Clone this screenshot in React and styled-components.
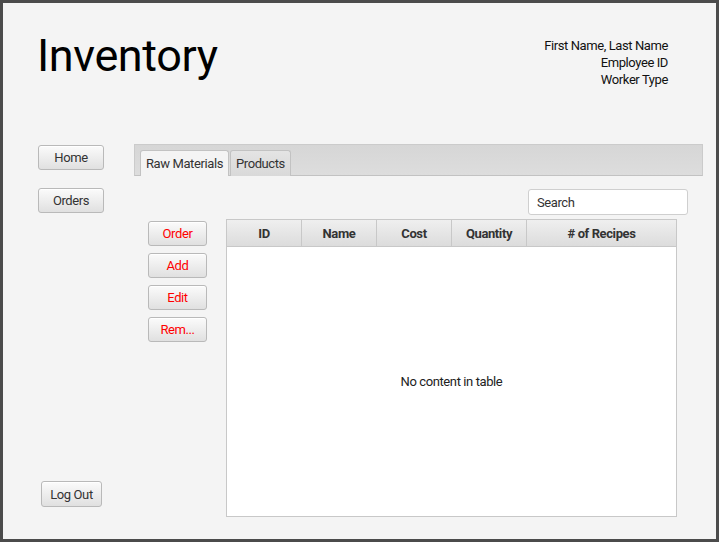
import React from 'react'
import styled, { createGlobalStyle } from 'styled-components'

const GlobalStyle = createGlobalStyle`
  html, body { margin: 0; padding: 0; }
  body {
    font-family: Roboto, "Liberation Sans", sans-serif;
    background: #4b4b4b;
  }
`

const Frame = styled.div`
  width: 719px;
  height: 542px;
  box-sizing: border-box;
  border: 3px solid #4b4b4b;
  background: #f4f4f4;
  display: flex;
  flex-direction: column;
  letter-spacing: -0.4px;
`

const Header = styled.div`
  height: 141px;
  flex: none;
  display: flex;
  justify-content: space-between;
  align-items: flex-start;
  padding: 0 48px 0 34px;
`

const Title = styled.h1`
  margin: 30px 0 0;
  font-size: 45px;
  line-height: 46px;
  font-weight: 400;
  color: #000;
  letter-spacing: -0.4px;
`

const UserInfo = styled.div`
  margin-top: 34px;
  text-align: right;
  font-size: 13px;
  line-height: 17px;
  color: #111;
`

const Body = styled.div`
  flex: 1;
  display: flex;
  gap: 30px;
  padding: 0 13px 22px 35px;
  min-height: 0;
`

const Sidebar = styled.div`
  width: 66px;
  flex: none;
  display: flex;
  flex-direction: column;
  align-items: center;
  gap: 18px;
  padding: 1px 0 10px;
`

const Button = styled.button`
  box-sizing: border-box;
  width: ${p => p.$w || 66}px;
  height: ${p => p.$h || 25}px;
  padding: 0;
  border: 1px solid #b9b9b9;
  border-radius: 3px;
  background: linear-gradient(to bottom, #fbfbfb, #e0e0e0);
  box-shadow: inset 0 1px 0 #ffffff;
  font-family: Roboto, "Liberation Sans", sans-serif;
  font-size: 13px;
  letter-spacing: -0.4px;
  color: ${p => (p.$danger ? '#ff0000' : '#333')};
  cursor: pointer;
`

const LogOutButton = styled(Button)`
  margin-top: auto;
  margin-left: 1px;
`

const Main = styled.div`
  flex: 1;
  display: flex;
  flex-direction: column;
  min-width: 0;
`

const TabHeader = styled.div`
  height: 32px;
  flex: none;
  box-sizing: border-box;
  border: 1px solid #cbcbcb;
  border-bottom-color: #c2c2c2;
  background: linear-gradient(to bottom, #d6d6d6, #dddddd);
  display: flex;
  align-items: flex-end;
  gap: 1px;
  padding-left: 5px;
`

const Tab = styled.div`
  box-sizing: border-box;
  height: 26px;
  margin-bottom: -1px;
  padding: 0 5px;
  display: flex;
  align-items: center;
  font-size: 13px;
  color: #333;
  border: 1px solid #c2c2c2;
  border-bottom: none;
  border-radius: 3px 3px 0 0;
  background: ${p =>
    p.$active ? '#f4f4f4' : 'linear-gradient(to bottom, #e4e4e4, #d9d9d9)'};
`

const SearchRow = styled.div`
  display: flex;
  justify-content: flex-end;
  padding: 13px 15px 0 0;
`

const SearchInput = styled.input`
  box-sizing: border-box;
  width: 160px;
  height: 26px;
  border: 1px solid #cfcfcf;
  border-radius: 3px;
  background: #fff;
  padding: 0 8px;
  font-family: Roboto, "Liberation Sans", sans-serif;
  font-size: 13px;
  letter-spacing: -0.4px;
  color: #333;
  outline: none;
`

const ContentRow = styled.div`
  flex: 1;
  display: flex;
  gap: 19px;
  margin-top: 4px;
  padding-left: 14px;
  min-height: 0;
`

const Actions = styled.div`
  width: 59px;
  flex: none;
  display: flex;
  flex-direction: column;
  gap: 7px;
  padding-top: 2px;
`

const Table = styled.div`
  width: 451px;
  box-sizing: border-box;
  border: 1px solid #c8c8c8;
  background: #fff;
  display: flex;
  flex-direction: column;
`

const HeaderRow = styled.div`
  display: grid;
  grid-template-columns: 75px 75px 75px 75px 1fr;
  height: 27px;
  flex: none;
  box-sizing: border-box;
  border-bottom: 1px solid #c8c8c8;
`

const HeaderCell = styled.div`
  display: flex;
  align-items: center;
  justify-content: center;
  background: linear-gradient(to bottom, #efefef, #dcdcdc);
  border-right: 1px solid #c8c8c8;
  font-size: 13px;
  font-weight: 700;
  color: #333;
  letter-spacing: -0.4px;

  &:last-child {
    border-right: none;
  }
`

const Empty = styled.div`
  flex: 1;
  display: flex;
  align-items: center;
  justify-content: center;
  font-size: 13px;
  color: #222;
`

const columns = ['ID', 'Name', 'Cost', 'Quantity', '# of Recipes']
const actions = ['Order', 'Add', 'Edit', 'Rem...']

export default function App() {
  return (
    <>
      <GlobalStyle />
      <Frame>
        <Header>
          <Title>Inventory</Title>
          <UserInfo>
            <div>First Name, Last Name</div>
            <div>Employee ID</div>
            <div>Worker Type</div>
          </UserInfo>
        </Header>
        <Body>
          <Sidebar>
            <Button>Home</Button>
            <Button>Orders</Button>
            <LogOutButton $w={61} $h={26}>Log Out</LogOutButton>
          </Sidebar>
          <Main>
            <TabHeader>
              <Tab $active>Raw Materials</Tab>
              <Tab>Products</Tab>
            </TabHeader>
            <SearchRow>
              <SearchInput defaultValue="Search" />
            </SearchRow>
            <ContentRow>
              <Actions>
                {actions.map(a => (
                  <Button key={a} $w={59} $danger>{a}</Button>
                ))}
              </Actions>
              <Table>
                <HeaderRow>
                  {columns.map(c => (
                    <HeaderCell key={c}>{c}</HeaderCell>
                  ))}
                </HeaderRow>
                <Empty>No content in table</Empty>
              </Table>
            </ContentRow>
          </Main>
        </Body>
      </Frame>
    </>
  )
}
